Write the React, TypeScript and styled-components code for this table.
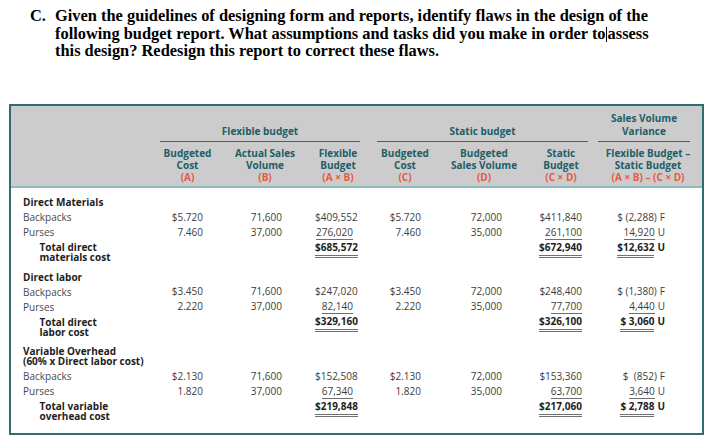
import React from "react";
import styled, { createGlobalStyle } from "styled-components";

const COLS = "149px 55px 100px 46px 88px 70px 84px 90px 1fr";
const PAD = [12, 33, 8, 28, 17, 21, 28];

const GlobalStyle = createGlobalStyle`
  html, body { margin: 0; padding: 0; background: #fff; }
  body { font-family: "Open Sans", "DejaVu Sans", sans-serif; }
`;

const Page = styled.div`
  width: 712px;
  height: 444px;
  overflow: hidden;
`;

const Question = styled.div`
  display: flex;
  padding: 7px 0 0 30px;
  font-family: "Liberation Serif", "Times New Roman", serif;
  font-weight: 700;
  font-size: 16.4px;
  line-height: 17.5px;
  color: #000;
`;

const QLetter = styled.div`
  width: 25px;
  flex: none;
`;

const QText = styled.div`
  white-space: nowrap;
`;

const Cursor = styled.span`
  display: inline-block;
  width: 0;
  height: 15px;
  border-left: 1px solid #000;
  vertical-align: -3px;
  margin: 0 1px 0 0;
`;

const ReportBox = styled.div`
  box-sizing: border-box;
  margin: 44px 0 0 9px;
  width: 695px;
  border: 2px solid #2f6d73;
  font-family: "Open Sans", "DejaVu Sans", sans-serif;
  font-size: 10px;
`;

const HeaderBand = styled.div`
  display: grid;
  grid-template-columns: ${COLS};
  grid-template-rows: auto auto;
  background: #cccccc;
  border-bottom: 2px solid #8dbabd;
  padding: 6px 0 3px;
`;

const GroupTitle = styled.div<{ $col: string; $ml: number; $mr: number }>`
  grid-row: 1;
  grid-column: ${(p) => p.$col};
  align-self: end;
  margin: 0 ${(p) => p.$mr}px 0 ${(p) => p.$ml}px;
  padding-bottom: 3.5px;
  border-bottom: 1.5px solid #2d6a72;
  text-align: center;
  font-weight: 700;
  line-height: 13px;
  color: #215e68;
  white-space: nowrap;
`;

const ColHead = styled.div<{ $col: number }>`
  grid-row: 2;
  grid-column: ${(p) => p.$col};
  padding-top: 4.5px;
  text-align: center;
  font-weight: 700;
  line-height: 12px;
  color: #215e68;
  white-space: nowrap;
`;

const Formula = styled.span`
  display: block;
  color: #e45a45;
  font-weight: 700;
`;

const Body = styled.div`
  padding: 7px 0 5px;
`;

const Row = styled.div<{ $total?: boolean }>`
  display: grid;
  grid-template-columns: ${COLS};
  align-items: start;
  margin-bottom: ${(p) => (p.$total ? 4.5 : 0)}px;
  min-height: 15px;
`;

const Label = styled.div<{ $kind: "section" | "item" | "total" }>`
  padding-left: ${(p) => (p.$kind === "total" ? 28.5 : 12)}px;
  padding-top: 2.5px;
  padding-bottom: 2.5px;
  line-height: 10px;
  font-weight: ${(p) => (p.$kind === "item" ? 400 : 700)};
  color: ${(p) => (p.$kind === "item" ? "#4a4a4a" : "#1e1e1e")};
  white-space: nowrap;
`;

const Cell = styled.div<{ $pr: number }>`
  text-align: right;
  padding-right: ${(p) => p.$pr}px;
  white-space: nowrap;
`;

const Amount = styled.span<{ $under?: "single" | "double"; $bold?: boolean }>`
  display: inline-block;
  line-height: 14px;
  padding-bottom: ${(p) => (p.$under === "double" ? 1 : 0)}px;
  font-weight: ${(p) => (p.$bold ? 700 : 400)};
  color: ${(p) => (p.$bold ? "#1e1e1e" : "#3c3c3c")};
  border-bottom: ${(p) =>
    p.$under === "double"
      ? "3px double #707070"
      : p.$under === "single"
      ? "1px solid #6e6e6e"
      : "none"};
`;

const VarCell = styled.div`
  display: flex;
  justify-content: flex-end;
  align-items: flex-start;
  padding-right: ${PAD[6]}px;
  white-space: nowrap;
`;

const Suffix = styled.span<{ $bold?: boolean }>`
  display: inline-block;
  line-height: 14px;
  padding-left: 3px;
  font-weight: ${(p) => (p.$bold ? 700 : 400)};
  color: ${(p) => (p.$bold ? "#1e1e1e" : "#3c3c3c")};
`;

type Variance = { amount: string; suffix: "F" | "U" };
type Item = { label: string; vals: string[]; variance: Variance; under?: boolean };
type Section = {
  title: string[];
  items: Item[];
  total: { label: string[]; flex: string; stat: string; variance: Variance };
};

const sections: Section[] = [
  {
    title: ["Direct Materials"],
    items: [
      {
        label: "Backpacks",
        vals: ["$5.720", "71,600", "$409,552", "$5.720", "72,000", "$411,840"],
        variance: { amount: "$ (2,288)", suffix: "F" },
      },
      {
        label: "Purses",
        vals: ["7.460", "37,000", "276,020", "7.460", "35,000", "261,100"],
        variance: { amount: "14,920", suffix: "U" },
        under: true,
      },
    ],
    total: {
      label: ["Total direct", "materials cost"],
      flex: "$685,572",
      stat: "$672,940",
      variance: { amount: "$12,632", suffix: "U" },
    },
  },
  {
    title: ["Direct labor"],
    items: [
      {
        label: "Backpacks",
        vals: ["$3.450", "71,600", "$247,020", "$3.450", "72,000", "$248,400"],
        variance: { amount: "$ (1,380)", suffix: "F" },
      },
      {
        label: "Purses",
        vals: ["2.220", "37,000", "82,140", "2.220", "35,000", "77,700"],
        variance: { amount: "4,440", suffix: "U" },
        under: true,
      },
    ],
    total: {
      label: ["Total direct", "labor cost"],
      flex: "$329,160",
      stat: "$326,100",
      variance: { amount: "$\u00a03,060", suffix: "U" },
    },
  },
  {
    title: ["Variable Overhead", "(60% x Direct labor cost)"],
    items: [
      {
        label: "Backpacks",
        vals: ["$2.130", "71,600", "$152,508", "$2.130", "72,000", "$153,360"],
        variance: { amount: "$\u00a0\u00a0(852)", suffix: "F" },
      },
      {
        label: "Purses",
        vals: ["1.820", "37,000", "67,340", "1.820", "35,000", "63,700"],
        variance: { amount: "3,640", suffix: "U" },
        under: true,
      },
    ],
    total: {
      label: ["Total variable", "overhead cost"],
      flex: "$219,848",
      stat: "$217,060",
      variance: { amount: "$\u00a02,788", suffix: "U" },
    },
  },
];

const UNDERLINED = [2, 5];

function VarianceCell({ v, under, bold }: { v: Variance; under?: "single" | "double"; bold?: boolean }) {
  return (
    <VarCell>
      <Amount $under={under} $bold={bold}>
        {v.amount}
      </Amount>
      <Suffix $bold={bold}>{v.suffix}</Suffix>
    </VarCell>
  );
}

function Lines({ lines }: { lines: string[] }) {
  return (
    <>
      {lines.map((l, i) => (
        <React.Fragment key={i}>
          {i > 0 && <br />}
          {l}
        </React.Fragment>
      ))}
    </>
  );
}

export default function App() {
  return (
    <Page>
      <GlobalStyle />
      <Question>
        <QLetter>C.</QLetter>
        <QText>
          Given the guidelines of designing form and reports, identify flaws in the design of the
          <br />
          following budget report. What assumptions and tasks did you make in order to
          <Cursor />
          assess
          <br />
          this design? Redesign this report to correct these flaws.
        </QText>
      </Question>

      <ReportBox>
        <HeaderBand>
          <GroupTitle $col="2 / 5" $ml={0} $mr={1}>Flexible budget</GroupTitle>
          <GroupTitle $col="5 / 8" $ml={16} $mr={15}>Static budget</GroupTitle>
          <GroupTitle $col="8 / 9" $ml={-5} $mr={3}>
            Sales Volume
            <br />
            Variance
          </GroupTitle>

          <ColHead $col={2}>
            Budgeted
            <br />
            Cost
            <Formula>(A)</Formula>
          </ColHead>
          <ColHead $col={3}>
            Actual Sales
            <br />
            Volume
            <Formula>(B)</Formula>
          </ColHead>
          <ColHead $col={4}>
            Flexible
            <br />
            Budget
            <Formula>(A × B)</Formula>
          </ColHead>
          <ColHead $col={5}>
            Budgeted
            <br />
            Cost
            <Formula>(C)</Formula>
          </ColHead>
          <ColHead $col={6}>
            Budgeted
            <br />
            Sales Volume
            <Formula>(D)</Formula>
          </ColHead>
          <ColHead $col={7}>
            Static
            <br />
            Budget
            <Formula>(C × D)</Formula>
          </ColHead>
          <ColHead $col={8}>
            Flexible Budget –
            <br />
            Static Budget
            <Formula>(A × B) – (C × D)</Formula>
          </ColHead>
        </HeaderBand>

        <Body>
          {sections.map((s, si) => (
            <React.Fragment key={si}>
              <Row>
                <Label $kind="section">
                  <Lines lines={s.title} />
                </Label>
              </Row>
              {s.items.map((it, ii) => (
                <Row key={ii}>
                  <Label $kind="item">{it.label}</Label>
                  {it.vals.map((v, vi) => (
                    <Cell key={vi} $pr={PAD[vi]}>
                      <Amount $under={it.under && UNDERLINED.includes(vi) ? "single" : undefined}>{v}</Amount>
                    </Cell>
                  ))}
                  <VarianceCell v={it.variance} under={it.under ? "single" : undefined} />
                </Row>
              ))}
              <Row $total>
                <Label $kind="total">
                  <Lines lines={s.total.label} />
                </Label>
                {[0, 1, 2, 3, 4, 5].map((ci) => (
                  <Cell key={ci} $pr={PAD[ci]}>
                    {ci === 2 && (
                      <Amount $under="double" $bold>
                        {s.total.flex}
                      </Amount>
                    )}
                    {ci === 5 && (
                      <Amount $under="double" $bold>
                        {s.total.stat}
                      </Amount>
                    )}
                  </Cell>
                ))}
                <VarianceCell v={s.total.variance} under="double" bold />
              </Row>
            </React.Fragment>
          ))}
        </Body>
      </ReportBox>
    </Page>
  );
}
